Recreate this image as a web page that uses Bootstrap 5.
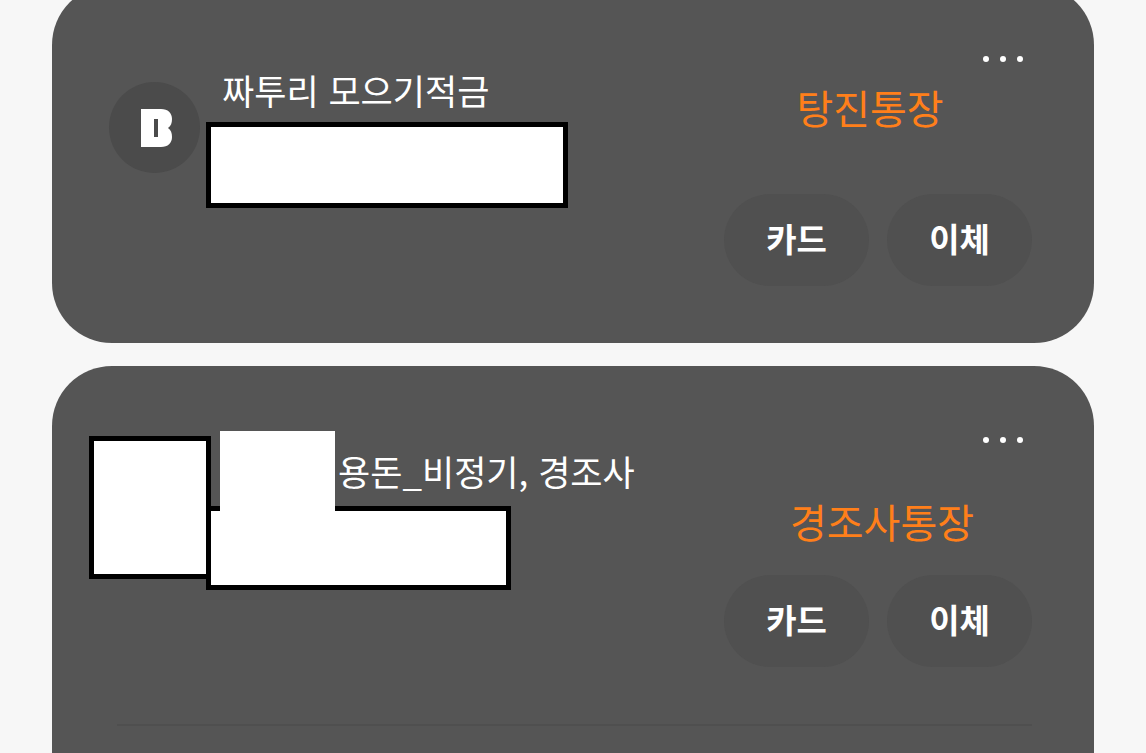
<!DOCTYPE html>
<html lang="ko">
<head>
<meta charset="utf-8">
<meta name="viewport" content="width=device-width, initial-scale=1">
<title>통장</title>
<link href="https://cdn.jsdelivr.net/npm/bootstrap@5.3.0/dist/css/bootstrap.min.css" rel="stylesheet">
<style>
body { background: #f7f7f7; font-family: "Noto Sans CJK KR", sans-serif; color: #fff; }
.accounts { padding: 0 52px; margin-top: -15px; gap: 23px; height: calc(100vh + 15px); }
.account { background: #555; border-radius: 60px; padding: 62px 62px 0 57px; }
.account-first { height: 358px; flex: none; }
.account-last { border-radius: 60px 60px 0 0; }
.account-name { font-size: 35px; line-height: 48px; }
.bank-logo { width: 91px; height: 91px; background: #4b4b4b; margin: 35px 6px 0 0; padding-left: 3px; }
.details { padding-top: 19px; }
.indent { padding-left: 16px; }
.masked { background: #fff; border: 5px solid #000; }
.masked-number { width: 362px; height: 86px; margin-top: 8px; }
.masked-number-short { width: 305px; height: 84px; margin-top: 11px; }
.masked-logo { width: 122px; height: 143px; margin: 8px -5px 0 -20px; }
.name-slot { width: 116px; }
.name-patch { position: absolute; right: 3px; top: -16px; width: 115px; height: 80px; background: #fff; }
.side { width: 308px; }
.more-btn { width: 56px; height: 24px; line-height: 0; }
.label-area { height: 81px; margin: 12px 0 30px; }
.label-text { color: #ff7f1a; font-size: 40px; line-height: 48px; }
.side-actions { gap: 18px; }
.pill { flex: 1; height: 92px; border: 0; border-radius: 46px; background: #505050; color: #fff; font-size: 33px; font-weight: 700; padding: 0 0 3px; }
.pill:hover { background: #4b4b4b; color: #fff; }
.divider { height: 2px; margin: 57px 0 0 8px; background: #4f4f4f; border: 0; opacity: 1; }
</style>
<script src="https://cdn.jsdelivr.net/npm/bootstrap@5.3.0/dist/js/bootstrap.bundle.min.js"></script>
</head>
<body class="overflow-hidden">
<main class="accounts d-flex flex-column">
  <section class="account account-first">
    <div class="d-flex justify-content-between">
      <div class="d-flex align-items-start">
        <div class="bank-logo rounded-circle d-flex align-items-center justify-content-center">
          <svg width="31" height="38" viewBox="0 0 31 38" aria-hidden="true"><path fill="#fff" fill-rule="evenodd" d="M0 0H20C27 0 31 4 31 10C31 14 30 17 27 19C30 21 31 24 31 28C31 34 27 38 20 38H0ZM13 10V28H17V10Z"/></svg>
        </div>
        <div class="details">
          <div class="account-name indent text-nowrap">짜투리 모으기적금</div>
          <div class="masked masked-number"></div>
        </div>
      </div>
      <div class="side flex-shrink-0">
        <div class="d-flex justify-content-end">
          <button class="btn p-0 border-0 more-btn" type="button" aria-label="더보기"><svg width="56" height="24" viewBox="0 0 56 24" fill="#fff"><circle cx="10" cy="12" r="3"/><circle cx="27" cy="12" r="3"/><circle cx="44" cy="12" r="3"/></svg></button>
        </div>
        <div class="label-area d-flex justify-content-center align-items-start pe-3"><span class="label-text">탕진통장</span></div>
        <div class="side-actions d-flex"><button class="btn pill" type="button">카드</button><button class="btn pill" type="button">이체</button></div>
      </div>
    </div>
  </section>

  <section class="account account-last flex-grow-1">
    <div class="d-flex justify-content-between">
      <div class="d-flex align-items-start">
        <div class="masked masked-logo"></div>
        <div class="details">
          <div class="account-name indent d-flex text-nowrap">
            <span class="name-slot position-relative"><span class="name-patch"></span></span>
            <span>용돈_비정기, 경조사</span>
          </div>
          <div class="masked masked-number-short"></div>
        </div>
      </div>
      <div class="side flex-shrink-0">
        <div class="d-flex justify-content-end">
          <button class="btn p-0 border-0 more-btn" type="button" aria-label="더보기"><svg width="56" height="24" viewBox="0 0 56 24" fill="#fff"><circle cx="10" cy="12" r="3"/><circle cx="27" cy="12" r="3"/><circle cx="44" cy="12" r="3"/></svg></button>
        </div>
        <div class="label-area d-flex justify-content-center align-items-end ps-2"><span class="label-text">경조사통장</span></div>
        <div class="side-actions d-flex"><button class="btn pill" type="button">카드</button><button class="btn pill" type="button">이체</button></div>
      </div>
    </div>
    <hr class="divider">
  </section>
</main>
</body>
</html>
